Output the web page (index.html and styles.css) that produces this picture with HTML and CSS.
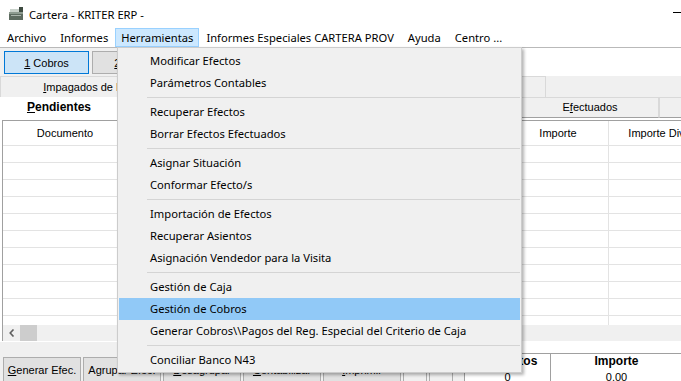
FILE: index.html
```html
<!DOCTYPE html>
<html>
<head>
	<meta charset="utf-8">
	<title>Cartera - KRITER ERP -</title>
	<link rel="stylesheet" href="styles.css">
</head>
<body>
<div class="window">
	<div class="titlebar">
		<svg class="appicon" width="16" height="13" viewBox="0 0 16 13">
			<path d="M1 5h14v8H1z" fill="#5d6b60"/>
			<path d="M1 5h14v2H1z" fill="#8d9b90"/>
			<path d="M2 2h9v3H2z" fill="#c9d2cb"/>
			<path d="M11 0h4v5h-4z" fill="#3d4a40"/>
			<path d="M3 8h10v1H3z" fill="#aab5ac"/>
		</svg>
		<span class="title">Cartera - KRITER ERP -</span>
		<span class="minimize"></span>
	</div>

	<div class="menubar">
		<span class="mitem">Archivo</span>
		<span class="mitem">Informes</span>
		<span class="mitem open">Herramientas</span>
		<span class="mitem">Informes Especiales CARTERA PROV</span>
		<span class="mitem">Ayuda</span>
		<span class="mitem">Centro ...</span>
	</div>

	<div class="toolbar">
		<div class="toolpanel">
			<button class="tbtn active"><u>1</u> Cobros</button>
			<button class="tbtn"><u>2</u> Pagos</button>
			<button class="tbtn"><u>3</u> Remesas</button>
		</div>
	</div>

	<div class="tabrow first">
		<div class="tab t1"><u>I</u>mpagados de Facturas</div>
		<div class="tab t2">Remesas</div>
		<div class="tab t3">Riesgo</div>
	</div>
	<div class="tabrow second">
		<div class="tab sel"><u>P</u>endientes</div>
		<div class="tab t4">Remesados</div>
		<div class="tab t5">Devueltos</div>
		<div class="tab t6">E<u>f</u>ectuados</div>
		<div class="tab t7">Todos</div>
	</div>

	<div class="page">
		<div class="grid">
			<div class="grow head">
				<div class="cell">Documento</div>
				<div class="cell">Fecha</div>
				<div class="cell">Vencimiento</div>
				<div class="cell">Cliente</div>
				<div class="cell">Nombre</div>
				<div class="cell">Importe</div>
				<div class="cell">Importe Divisa</div>
			</div>
			<div class="gbody">
				<div class="grow"><div class="cell"></div><div class="cell"></div><div class="cell"></div><div class="cell"></div><div class="cell"></div><div class="cell"></div><div class="cell"></div></div>
				<div class="grow"><div class="cell"></div><div class="cell"></div><div class="cell"></div><div class="cell"></div><div class="cell"></div><div class="cell"></div><div class="cell"></div></div>
				<div class="grow"><div class="cell"></div><div class="cell"></div><div class="cell"></div><div class="cell"></div><div class="cell"></div><div class="cell"></div><div class="cell"></div></div>
				<div class="grow"><div class="cell"></div><div class="cell"></div><div class="cell"></div><div class="cell"></div><div class="cell"></div><div class="cell"></div><div class="cell"></div></div>
				<div class="grow"><div class="cell"></div><div class="cell"></div><div class="cell"></div><div class="cell"></div><div class="cell"></div><div class="cell"></div><div class="cell"></div></div>
				<div class="grow"><div class="cell"></div><div class="cell"></div><div class="cell"></div><div class="cell"></div><div class="cell"></div><div class="cell"></div><div class="cell"></div></div>
				<div class="grow"><div class="cell"></div><div class="cell"></div><div class="cell"></div><div class="cell"></div><div class="cell"></div><div class="cell"></div><div class="cell"></div></div>
				<div class="grow"><div class="cell"></div><div class="cell"></div><div class="cell"></div><div class="cell"></div><div class="cell"></div><div class="cell"></div><div class="cell"></div></div>
				<div class="grow"><div class="cell"></div><div class="cell"></div><div class="cell"></div><div class="cell"></div><div class="cell"></div><div class="cell"></div><div class="cell"></div></div>
				<div class="grow"><div class="cell"></div><div class="cell"></div><div class="cell"></div><div class="cell"></div><div class="cell"></div><div class="cell"></div><div class="cell"></div></div>
				<div class="grow"><div class="cell"></div><div class="cell"></div><div class="cell"></div><div class="cell"></div><div class="cell"></div><div class="cell"></div><div class="cell"></div></div>
			</div>
			<div class="hscroll">
				<svg class="arrow" width="6" height="8" viewBox="0 0 6 8"><path d="M4.5 0.5L1.2 4l3.3 3.5" fill="none" stroke="#606060" stroke-width="1.6"/></svg>
				<span class="thumb"></span>
			</div>
		</div>
	</div>

	<div class="bottom">
		<div class="buttons">
			<button class="bbtn"><u>G</u>enerar Efec.</button>
			<button class="bbtn">Agrupar Efec.</button>
			<button class="bbtn"><u>D</u>esagrupar</button>
			<button class="bbtn"><u>C</u>ontabilizar</button>
			<button class="bbtn"><u>I</u>mprimir</button>
			<button class="sbtn"><span class="ico-black"></span></button>
			<button class="sbtn"><span class="ico-yellow"></span></button>
		</div>
		<div class="totals">
			<div class="trow thead">
				<div class="tcell">Nº Efectos</div>
				<div class="tcell">Importe</div>
			</div>
			<div class="trow">
				<div class="tcell">0</div>
				<div class="tcell">0.00</div>
			</div>
		</div>
	</div>

	<!-- menu Herramientas desplegado -->
	<div class="dropdown">
		<div class="ditem">Modificar Efectos</div>
		<div class="ditem">Parámetros Contables</div>
		<div class="dsep"></div>
		<div class="ditem">Recuperar Efectos</div>
		<div class="ditem">Borrar Efectos Efectuados</div>
		<div class="dsep"></div>
		<div class="ditem">Asignar Situación</div>
		<div class="ditem">Conformar Efecto/s</div>
		<div class="dsep"></div>
		<div class="ditem">Importación de Efectos</div>
		<div class="ditem">Recuperar Asientos</div>
		<div class="ditem">Asignación Vendedor para la Visita</div>
		<div class="dsep"></div>
		<div class="ditem">Gestión de Caja</div>
		<div class="ditem hi">Gestión de Cobros</div>
		<div class="ditem">Generar Cobros\\Pagos del Reg. Especial del Criterio de Caja</div>
		<div class="dsep"></div>
		<div class="ditem">Conciliar Banco N43</div>
	</div>
</div>
</body>
</html>
```

FILE: styles.css
```css
body{
	margin: 0;
	background-color: #f0f0f0;
	font-family: "Noto Sans", sans-serif;
	font-size: 11.2px;
	color: #000;
	overflow: hidden;
}
.window{
	position: relative;
	width: 681px;
	height: 381px;
	overflow: hidden;
}

/* barra de titulo */
.titlebar{
	height: 28px;
	background-color: #fff;
	display: flex;
	align-items: center;
}
.appicon{
	margin: 0 5px 1px 8px;
}
.title{
	flex: 1;
}
.minimize{
	width: 10px;
	border-top: 1px solid #000;
	margin: 0 -2px 4px 0;
}

/* menu */
.menubar{
	height: 19px;
	background-color: #fff;
	display: flex;
}
.mitem{
	padding: 0 7px;
	line-height: 19px;
	white-space: nowrap;
}
.mitem.open{
	padding: 0 6px;
	background-color: #cce8ff;
	box-shadow: inset 0 0 0 1px #99d1ff;
}

/* botones de modulo */
.toolbar{
	height: 29px;
	box-sizing: border-box;
	background-color: #fff;
	border-top: 1px solid #b9b9b9;
}
.toolpanel{
	width: 400px;
	height: 100%;
	background-color: #f0f0f0;
	padding: 3px 0 0 4px;
	box-sizing: border-box;
	display: flex;
	gap: 3px;
}
.tbtn, .bbtn, .sbtn{
	font-family: "Liberation Sans", Arial, sans-serif;
	font-size: 11px;
	color: #000;
	background-color: #e1e1e1;
	border: 1px solid #adadad;
	padding: 0;
	margin: 0;
	box-sizing: border-box;
	white-space: nowrap;
}
.tbtn{
	width: 85px;
	height: 23px;
}
.tbtn.active{
	background-color: #cce4f7;
	border-color: #0078d7;
}

/* pestañas */
.tabrow{
	display: flex;
	height: 21px;
	font-family: "Liberation Sans", Arial, sans-serif;
	font-size: 11px;
}
.tab{
	box-sizing: border-box;
	border: 1px solid #d9d9d9;
	border-bottom: none;
	text-align: center;
	line-height: 20px;
	white-space: nowrap;
	flex: none;
}
.tabrow.second .tab{
	border-bottom: 1px solid #a0a0a0;
	line-height: 19px;
}
.tabrow.second .tab.sel{
	background-color: #fff;
	border-color: #fff;
	font-size: 12px;
	font-weight: bold;
}
.t1{ width: 202px; }
.t2{ width: 178px; }
.t3{ width: 166px; }
.sel{ width: 118px; }
.t4{ width: 202px; }
.t5{ width: 201px; }
.t6{ width: 138px; }
.t7{ width: 120px; }

/* rejilla */
.page{
	height: 224px;
	background-color: #fff;
	padding: 2px 0 0 2px;
	box-sizing: border-box;
}
.grid{
	border-left: 1px solid #a0a0a0;
	border-top: 1px solid #a0a0a0;
	font-family: "Liberation Sans", Arial, sans-serif;
	font-size: 11px;
}
.grow{
	display: grid;
	grid-template-columns: 125px 95px 95px 95px 95px 101px 110px;
	height: 17px;
	box-sizing: border-box;
	border-bottom: 1px solid #e3e3e3;
}
.grow.head{
	height: 25px;
}
.cell{
	border-right: 1px solid #e3e3e3;
	text-align: center;
	line-height: 24px;
	white-space: nowrap;
	overflow: hidden;
}
.gbody{
	height: 179px;
	overflow: hidden;
}
.hscroll{
	height: 16px;
	background-color: #f0f0f0;
	display: flex;
	align-items: center;
}
.arrow{
	margin: 0 5px 0 6px;
}
.thumb{
	width: 17px;
	height: 16px;
	background-color: #cdcdcd;
}

/* parte inferior */
.bottom{
	height: 39px;
	display: flex;
}
.buttons{
	flex: 1;
	display: flex;
	gap: 2px;
	padding: 15px 0 0 3px;
}
.bbtn{
	width: 78px;
	height: 26px;
}
.sbtn{
	width: 24px;
	height: 26px;
	background-color: #f0f0f0;
}
.ico-black{
	display: block;
	width: 10px;
	height: 3px;
	margin: 0 auto;
	background-color: #000;
}
.ico-yellow{
	display: block;
	width: 8px;
	height: 3px;
	margin: 0 auto;
	border-top: 2px dotted #f5e200;
}
.totals{
	width: 217px;
	background-color: #fff;
	padding-top: 11px;
	box-sizing: border-box;
	font-family: "Liberation Sans", Arial, sans-serif;
	font-size: 11px;
}
.trow{
	display: grid;
	grid-template-columns: 86px 131px;
	height: 15px;
	border-left: 1px solid #a0a0a0;
}
.trow.thead{
	height: 16px;
	border-top: 1px solid #a0a0a0;
	font-weight: bold;
	font-size: 12px;
}
.tcell{
	text-align: center;
	line-height: 15px;
}
.tcell:first-child{
	border-right: 1px solid #a0a0a0;
}

/* menu desplegable */
.dropdown{
	position: absolute;
	left: 117px;
	top: 47px;
	width: 405px;
	box-sizing: border-box;
	background-color: #f0f0f0;
	border: 1px solid #cccccc;
	padding: 2px 1px 1px 1px;
	box-shadow: 2px 2px 3px rgba(0,0,0,0.3);
}
.ditem{
	height: 22px;
	line-height: 22px;
	padding-left: 31px;
	white-space: nowrap;
}
.ditem.hi{
	background-color: #91c9f7;
}
.dsep{
	height: 1px;
	margin: 3px 0 3px 28px;
	background-color: #d4d4d4;
}
```
